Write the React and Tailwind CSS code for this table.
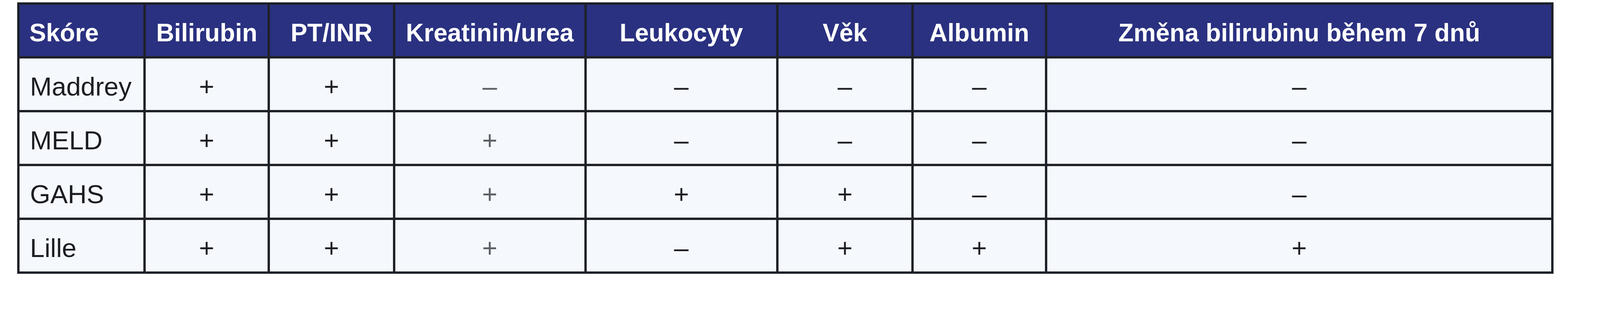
const columns = [
  "Skóre",
  "Bilirubin",
  "PT/INR",
  "Kreatinin/urea",
  "Leukocyty",
  "Věk",
  "Albumin",
  "Změna bilirubinu během 7 dnů",
];

// "+" / "–" per score; the Kreatinin/urea column is printed lighter in the source
const rows = [
  { name: "Maddrey", marks: ["+", "+", "–", "–", "–", "–", "–"] },
  { name: "MELD", marks: ["+", "+", "+", "–", "–", "–", "–"] },
  { name: "GAHS", marks: ["+", "+", "+", "+", "+", "–", "–"] },
  { name: "Lille", marks: ["+", "+", "+", "–", "+", "+", "+"] },
];

function HeaderCell({ label, first }) {
  return (
    <div
      className={`flex min-w-0 items-center bg-[#2a3180] pt-[0.334vw] text-[1.56vw] leading-none font-bold whitespace-nowrap text-white ${
        first ? "justify-start pl-[0.613vw]" : "justify-center"
      }`}
    >
      {label}
    </div>
  );
}

function MarkCell({ mark, muted }) {
  return (
    <div
      className={`flex min-w-0 items-center justify-center bg-[#f5f8fd] pt-[0.297vw] text-[1.634vw] leading-none ${
        muted ? "text-[#5c5f66]" : "text-[#1c1d22]"
      }`}
    >
      {mark}
    </div>
  );
}

export default function App() {
  return (
    <div className="min-h-[800px] w-full bg-white pt-[6px] pr-[2.9vw] pl-[1.077vw] font-['Liberation_Sans',Arial,sans-serif]">
      <div className="grid w-full grid-cols-[minmax(0,418fr)_minmax(0,412fr)_minmax(0,415fr)_minmax(0,638fr)_minmax(0,640fr)_minmax(0,449fr)_minmax(0,443fr)_minmax(0,1702fr)] auto-rows-[132px] gap-[6px] bg-[#1e2128] p-[6px]">
        {columns.map((c, i) => (
          <HeaderCell key={c} label={c} first={i === 0} />
        ))}
        {rows.map((r) => (
          <div key={r.name} className="contents">
            <div className="flex min-w-0 items-center bg-[#f5f8fd] pt-[0.297vw] pl-[0.65vw] text-[1.634vw] leading-none text-[#1c1d22]">
              {r.name}
            </div>
            {r.marks.map((m, i) => (
              <MarkCell key={i} mark={m} muted={i === 2} />
            ))}
          </div>
        ))}
      </div>
    </div>
  );
}
